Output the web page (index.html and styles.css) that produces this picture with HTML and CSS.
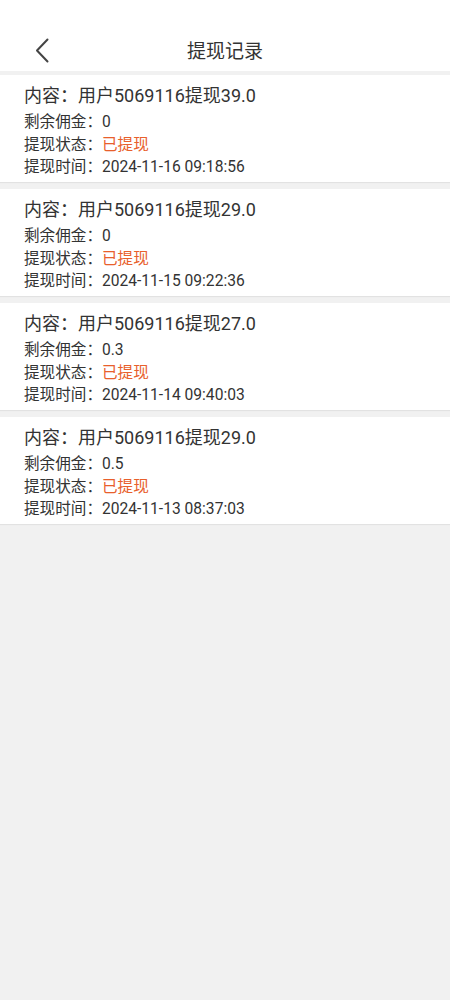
FILE: index.html
```html
<!DOCTYPE html>
<html lang="zh-CN">
<head>
<meta charset="utf-8">
<title>提现记录</title>
<link rel="stylesheet" href="styles.css">
</head>
<body>
<header class="topbar">
  <span class="back">
    <svg width="14" height="25" viewBox="0 0 14 25"><path d="M12.5 1.5 L2 12.5 L12.5 23.5" fill="none" stroke="#444" stroke-width="2" stroke-linecap="round" stroke-linejoin="round"/></svg>
  </span>
  <h1 class="title">提现记录</h1>
</header>
<main class="list">
  <section class="card">
    <div class="card-title">内容：用户5069116提现39.0</div>
    <div class="row">剩余佣金：0</div>
    <div class="row">提现状态：<span class="status">已提现</span></div>
    <div class="row">提现时间：2024-11-16 09:18:56</div>
  </section>
  <section class="card">
    <div class="card-title">内容：用户5069116提现29.0</div>
    <div class="row">剩余佣金：0</div>
    <div class="row">提现状态：<span class="status">已提现</span></div>
    <div class="row">提现时间：2024-11-15 09:22:36</div>
  </section>
  <section class="card">
    <div class="card-title">内容：用户5069116提现27.0</div>
    <div class="row">剩余佣金：0.3</div>
    <div class="row">提现状态：<span class="status">已提现</span></div>
    <div class="row">提现时间：2024-11-14 09:40:03</div>
  </section>
  <section class="card">
    <div class="card-title">内容：用户5069116提现29.0</div>
    <div class="row">剩余佣金：0.5</div>
    <div class="row">提现状态：<span class="status">已提现</span></div>
    <div class="row">提现时间：2024-11-13 08:37:03</div>
  </section>
</main>
</body>
</html>
```
FILE: styles.css
```css
html, body {
  margin: 0;
  padding: 0;
}
body {
  background: #f1f1f1;
  font-family: Roboto, "Noto Sans CJK SC", sans-serif;
  color: #333;
  min-height: 1000px;
}
.topbar {
  height: 71px;
  background: #fff;
  display: flex;
  align-items: flex-end;
  justify-content: center;
  position: relative;
}
.back {
  position: absolute;
  left: 35px;
  top: 38px;
  width: 14px;
  height: 25px;
}
.back svg { display: block; }
.title {
  margin: 0 0 6px;
  font-size: 19px;
  font-weight: normal;
  line-height: 26px;
  color: #333;
}
.list {
  padding-top: 4px;
  display: flex;
  flex-direction: column;
  gap: 7px;
}
.card {
  background: #fff;
  padding: 8px 24px 3px;
  height: 107px;
  box-sizing: border-box;
  box-shadow: 0 1px 1px rgba(0,0,0,0.06);
}
.card-title {
  font-size: 18px;
  line-height: 26px;
  color: #333;
}
.row {
  font-size: 15.6px;
  line-height: 22.5px;
  color: #333;
}
.card-title + .row { margin-top: 2px; }
.status { color: #e8602c; }
```
